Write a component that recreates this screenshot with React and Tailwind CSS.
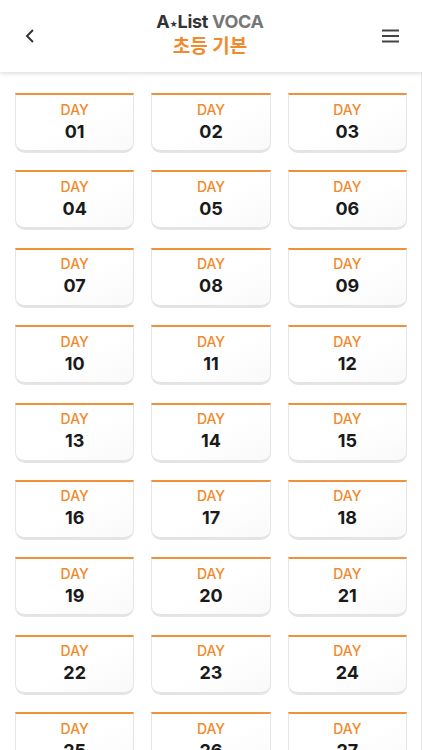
import React from "react";

const days = Array.from({ length: 27 }, (_, i) => String(i + 1).padStart(2, "0"));

function DayCard({ day }) {
  return (
    <button className="h-[60px] flex flex-col items-center justify-center pb-[2px] bg-gradient-to-br from-white via-white to-[#f9f9f9] border-x border-b-[3px] border-x-[#e6e6e6] border-b-[#e4e4e4] border-t-2 border-t-[#f0903a] rounded-b-[10px]">
      <span className="text-[14px] leading-[18px] font-medium text-[#f08a2c]">DAY</span>
      <span className="text-[18px] leading-[24px] font-bold text-[#1a1a1a] relative top-[1px]">{day}</span>
    </button>
  );
}

export default function App() {
  return (
    <div
      className="w-[422px] h-[750px] overflow-hidden bg-white flex flex-col"
      style={{ fontFamily: 'Inter, "Noto Sans CJK KR", sans-serif' }}
    >
      {/* 상단 헤더 */}
      <header className="h-[72px] shrink-0 flex items-center justify-between px-[20px] bg-white shadow-[0_2px_4px_rgba(0,0,0,0.12)] relative z-10">
        <svg width="18" height="18" viewBox="0 0 24 24" fill="none" stroke="#333" strokeWidth="2.6" strokeLinecap="square" className="ml-[1px]">
          <path d="M15 5l-7 7 7 7" />
        </svg>
        <div className="flex flex-col items-center">
          <div className="text-[18px] leading-[22px] font-bold tracking-[-0.3px]">
            <span className="text-[#333]">A</span>
            <span className="text-[#333] text-[8px] align-top relative top-[2px]">★</span>
            <span className="text-[#333]">List </span>
            <span className="text-[#777]">VOCA</span>
          </div>
          <div className="text-[19px] leading-[28px] font-bold text-[#f08a2c]">초등 기본</div>
        </div>
        <svg width="20" height="16" viewBox="0 0 20 16" className="mr-[1px]">
          <rect x="1" y="1.5" width="17" height="2" fill="#444" />
          <rect x="1" y="7" width="17" height="2" fill="#444" />
          <rect x="1" y="12.5" width="17" height="2" fill="#444" />
        </svg>
      </header>

      {/* 날짜 목록 */}
      <main className="flex-1 border-r border-r-[#ececec]">
        <div className="grid grid-cols-3 gap-x-[17px] gap-y-[17.4px] pl-[15px] pr-[14px] pt-[21px]">
          {days.map((d) => (
            <DayCard key={d} day={d} />
          ))}
        </div>
      </main>
    </div>
  );
}
